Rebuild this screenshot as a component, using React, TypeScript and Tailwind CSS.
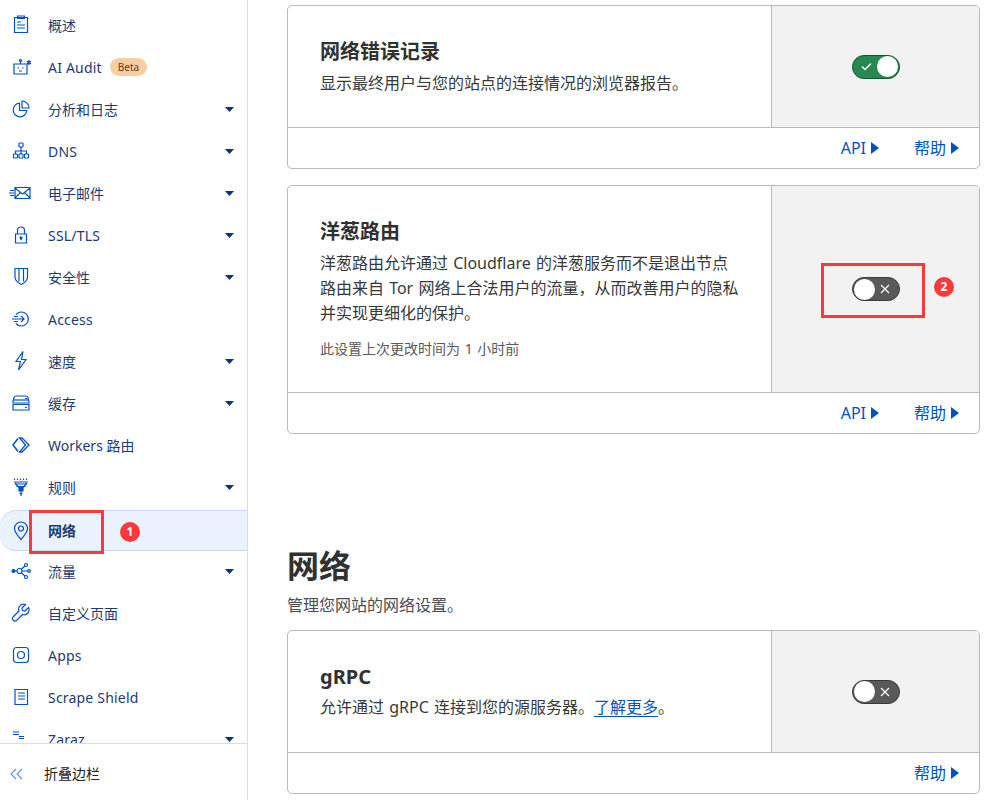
import React from "react";

const Caret = () => (
  <svg width="9" height="5" viewBox="0 0 10 5.500" className="absolute left-[225px] top-[19px]">
    <path d="M0 0h10L5 5.500z" fill="#003681" />
  </svg>
);

const s = { fill: "none", stroke: "#0051c3", strokeWidth: 1.2 };
const I = ({ children }: { children: React.ReactNode }) => (
  <svg width="20" height="20" viewBox="0 0 20 20" className="shrink-0" {...s}>
    {children}
  </svg>
);

const icons: Record<string, React.ReactNode> = {
  overview: (
    <I>
      <path d="M3.500 2.500h13v15h-13z" />
      <path d="M6.500 1h7v2.500h-7zM6 7h4M6 10h8M6 13h8" />
    </I>
  ),
  ai: (
    <I>
      <path d="M3 7h13v10H3zM9.500 7V4.500" />
      <circle cx="9.500" cy="3.500" r="1" />
      <path d="M6.500 11h1.500M11 11h1.500M8 14h3" />
      <path d="M18 3v5M15.800 4.200l4.400 2.600M20.200 4.200l-4.400 2.600" strokeWidth="1.300" />
    </I>
  ),
  pie: (
    <I>
      <path d="M8.500 4.200a6.800 6.800 0 1 0 7.300 7.300H8.500z" />
      <path d="M11 2a7 7 0 0 1 7 7h-7z" />
    </I>
  ),
  dns: (
    <I>
      <rect x="8" y="2" width="4" height="4" rx=".8" />
      <rect x="2.500" y="13" width="4" height="4" rx=".8" />
      <rect x="8" y="13" width="4" height="4" rx=".8" />
      <rect x="13.500" y="13" width="4" height="4" rx=".8" />
      <path d="M10 6v7M4.500 13v-3h11v3" />
    </I>
  ),
  mail: (
    <svg width="22" height="20" viewBox="0 0 22 20" className="shrink-0 -ml-[2px]" {...s}>
      <path d="M6 4.500h15v11H6zM6 5l7.500 6L21 5M6 15l5.500-5.500M21 15l-5.500-5.500" />
      <path d="M1 7.500h4M0 10h5M1 12.500h4" />
    </svg>
  ),
  lock: (
    <I>
      <path d="M4.500 9h11v9h-11z" />
      <path d="M6.500 9V5.500a3.500 3.500 0 0 1 7 0V9" />
      <circle cx="10" cy="12.800" r="1" fill="#0051c3" />
      <path d="M10 13v2.200" />
    </I>
  ),
  shield: (
    <I>
      <path d="M4 1.500h12.500v8.500c0 4-3.200 6-6.200 7.500-3-1.500-6.300-3.500-6.300-7.500z" />
      <path d="M8 1.500v13M12.500 1.500v13" />
    </I>
  ),
  access: (
    <svg width="20" height="20" viewBox="0 0 20 20" className="shrink-0" {...s}>
      <path d="M1 10h12M10 7l3 3-3 3" />
      <path d="M5 5.500a7 7 0 1 1 0 9" />
      <path d="M3 7.500h4M3 12.500h4" />
    </svg>
  ),
  bolt: (
    <I>
      <path d="M12 .5 5 10.500h4.500L7.500 19 15 8.500h-4.500z" />
    </I>
  ),
  cache: (
    <I>
      <path d="M5 3h10q1.500 0 2 1.500L18 8.500V10H2V8.500L3 4.500Q3.500 3 5 3zM2 11.500h16V17H2z" />
      <path d="M2.500 7h15" />
      <path d="M14 5.500h2M14 14.500h2" strokeWidth="1" />
    </I>
  ),
  workers: (
    <I>
      <path d="M7 3.500 2 10l5 6.500" strokeWidth="1.500" />
      <path d="M8.500 3h2.500l7 7-7 7H8.500l6-7z" strokeWidth="1.300" />
    </I>
  ),
  rules: (
    <I>
      <path d="M3.500 1.500v1.500M6.500 1.500v1.500M9.500 1.500v1.500M12.500 1.500v1.500M15.500 1.500v1.500" strokeWidth="1.200" />
      <path d="M3 5h14M4 7h12M5.500 9.500h9" strokeWidth="1.200" />
      <path d="M8 10.500h4v3.500H8z" fill="#0051c3" />
      <path d="M10 14v5M8.500 16.500h3" />
      <path d="M4 6l4 4.500M16 6l-4 4.500" />
    </I>
  ),
  pin: (
    <I>
      <path d="M10 18.500C6 14 3.500 10.500 3.500 7.500a6.500 6.500 0 0 1 13 0c0 3-2.500 6.500-6.500 11z" />
      <circle cx="10" cy="7.500" r="2.500" />
    </I>
  ),
  traffic: (
    <svg width="20" height="20" viewBox="0 0 20 20" className="shrink-0" {...s}>
      <circle cx="2.500" cy="10" r="1.500" fill="#0051c3" />
      <circle cx="8.500" cy="10" r="2.500" />
      <circle cx="15" cy="4" r="1.500" />
      <circle cx="18" cy="10" r="1.300" />
      <circle cx="15" cy="16" r="1.500" />
      <path d="M4 10h2M10.500 8l3.500-3M11 10h5.500M10.500 12l3.500 3" />
    </svg>
  ),
  wrench: (
    <I>
      <path d="M17.500 4.500 14 8l-2.500-.5L11 5l3.500-3.500a5 5 0 0 0-6.500 6.500L2 14a2.500 2.500 0 0 0 3.500 3.500l6-6a5 5 0 0 0 6-7z" />
    </I>
  ),
  apps: (
    <I>
      <rect x="2.500" y="2.500" width="15" height="15" rx="3" />
      <circle cx="10" cy="10" r="3.500" />
    </I>
  ),
  scrape: (
    <I>
      <path d="M4 2.500h12.500v15H4zM7 6h7M7 9h7M7 12h7" />
    </I>
  ),
  zaraz: (
    <I>
      <path d="M2 3h6M2 5.500h6M8 7.500h5M8 9.500h5" />
    </I>
  ),
};

const items: { key: string; label: string; caret?: boolean; beta?: boolean; active?: boolean; latin?: boolean }[] = [
  { key: "overview", label: "概述" },
  { key: "ai", label: "AI Audit", beta: true, latin: true },
  { key: "pie", label: "分析和日志", caret: true },
  { key: "dns", label: "DNS", caret: true, latin: true },
  { key: "mail", label: "电子邮件", caret: true },
  { key: "lock", label: "SSL/TLS", caret: true, latin: true },
  { key: "shield", label: "安全性", caret: true },
  { key: "access", label: "Access", latin: true },
  { key: "bolt", label: "速度", caret: true },
  { key: "cache", label: "缓存", caret: true },
  { key: "workers", label: "Workers 路由" },
  { key: "rules", label: "规则", caret: true },
  { key: "pin", label: "网络", active: true },
  { key: "traffic", label: "流量", caret: true },
  { key: "wrench", label: "自定义页面" },
  { key: "apps", label: "Apps", latin: true },
  { key: "scrape", label: "Scrape Shield", latin: true },
  { key: "zaraz", label: "Zaraz", caret: true, latin: true },
];

const Toggle = ({ on }: { on?: boolean }) =>
  on ? (
    <div className="flex h-6 w-12 items-center justify-between rounded-full border border-[#14522f] bg-[#26894d] pl-[8px] pr-[1px]">
      <svg width="11" height="9" viewBox="0 0 11 9" fill="none" stroke="#fff" strokeWidth="1.300">
        <path d="M1 4.500 4 7.500 10 1.500" />
      </svg>
      <div className="h-[21px] w-[21px] rounded-full bg-white" />
    </div>
  ) : (
    <div className="flex h-6 w-12 items-center justify-between rounded-full border border-[#3a3a3a] bg-[#595959] pl-[1px] pr-[9px]">
      <div className="h-[21px] w-[21px] rounded-full bg-white" />
      <svg width="10" height="10" viewBox="0 0 10 10" fill="none" stroke="#fff" strokeWidth="1.200">
        <path d="M1 1l8 8M9 1l-8 8" />
      </svg>
    </div>
  );

const LinkArrow = ({ label }: { label: string }) => (
  <span className="flex items-center gap-[5px] text-[16px] leading-6 text-[#0051c3]">
    {label}
    <svg width="8" height="14" viewBox="0 0 8 14">
      <path d="M0 1v12l8-6z" fill="#0051c3" />
    </svg>
  </span>
);

const Card = ({
  title,
  on,
  api,
  bodyH,
  children,
}: {
  title: string;
  on?: boolean;
  api?: boolean;
  bodyH: string;
  children: React.ReactNode;
}) => (
  <div className="w-[693px] overflow-hidden rounded-[5px] border border-[#b9b9b9] bg-white">
    <div className={`flex ${bodyH}`}>
      <div className="w-[484px] border-r border-[#b9b9b9] pl-[32px] pr-[32px] pt-[31px]">
        <h3 className="mb-[4px] text-[20px] font-bold leading-[30px] text-[#313131]">{title}</h3>
        {children}
      </div>
      <div className="flex flex-1 items-center justify-center bg-[#f2f2f2]">
        <Toggle on={on} />
      </div>
    </div>
    <div className="flex h-[41px] items-center justify-end gap-[35px] border-t border-[#b9b9b9] pr-[20px]">
      {api && <LinkArrow label="API" />}
      <LinkArrow label="帮助" />
    </div>
  </div>
);

const Badge = ({ n, className }: { n: number; className: string }) => (
  <div
    className={`absolute flex h-5 w-5 items-center justify-center rounded-full bg-[#f83a3a] text-[12px] font-bold text-white ${className}`}
  >
    {n}
  </div>
);

export default function App() {
  return (
    <div className="relative flex h-[800px] w-[986px] overflow-hidden bg-white font-['Noto_Sans','Noto_Sans_CJK_SC',sans-serif]">
      <aside className="flex h-[800px] w-[248px] shrink-0 flex-col border-r border-[#dcdcdc]">
        <nav className="min-h-0 flex-1 overflow-hidden pt-[4px]">
          {items.map((it) => (
            <div
              key={it.key}
              className={`relative flex items-center gap-[17px] pl-[11px] text-[14px] text-[#1d3a6e] ${
                it.active
                  ? "-mb-[1px] mt-[2px] h-[41px] rounded-l-[16px] border-y border-[#c3d9f7] bg-[#eaf2fd] font-bold"
                  : "h-[42px]"
              }`}
            >
              {icons[it.key]}
              <span className={it.latin ? "tracking-[0.2px]" : ""}>{it.label}</span>
              {it.beta && (
                <span className="-ml-[9px] rounded-full bg-[#fbcda0] px-[8px] text-[10px] leading-[18px] text-[#5b3a1e]">
                  Beta
                </span>
              )}
              {it.caret && <Caret />}
            </div>
          ))}
        </nav>
        <div className="flex h-[57px] shrink-0 items-center gap-[21px] border-t border-[#dcdcdc] bg-white pl-[10px] pt-[3px] text-[14px] text-[#222]">
          <svg width="13" height="12" viewBox="0 0 13 12" fill="none" stroke="#5b8fd6" strokeWidth="1.100">
            <path d="M6 1 1 6l5 5M12 1 7 6l5 5" />
          </svg>
          <span>折叠边栏</span>
        </div>
      </aside>

      <main className="flex min-w-0 flex-1 flex-col pl-[39px] pt-[5px]">
        <Card title="网络错误记录" on api bodyH="h-[121px]">
          <p className="text-[16px] leading-[25px] text-[#36393a]">显示最终用户与您的站点的连接情况的浏览器报告。</p>
        </Card>
        <div className="mt-[16px]">
          <Card title="洋葱路由" api bodyH="h-[206px]">
            <p className="text-[16px] leading-[25px] text-[#36393a] [word-spacing:1px]">
              洋葱路由允许通过 Cloudflare 的洋葱服务而不是退出节点路由来自 Tor 网络上合法用户的流量，从而改善用户的隐私并实现更细化的保护。
            </p>
            <p className="mt-[13px] text-[14px] leading-[20px] text-[#595959] [word-spacing:1px]">
              此设置上次更改时间为 1 小时前
            </p>
          </Card>
        </div>
        <h2 className="mt-[108px] text-[32px] font-bold leading-[48px] text-[#313131]">网络</h2>
        <p className="mb-[15px] mt-[5px] text-[16px] leading-[20px] text-[#4a4d4f]">管理您网站的网络设置。</p>
        <Card title="gRPC" bodyH="h-[121px]">
          <div className="-mt-[1px]">
            <p className="text-[16px] leading-[25px] text-[#36393a] [word-spacing:1px]">
              允许通过 gRPC 连接到您的源服务器。
              <a className="text-[#0051c3] underline underline-offset-[3px]">了解更多</a>。
            </p>
          </div>
        </Card>
      </main>

      <div className="absolute left-[29px] top-[510px] h-[44px] w-[75px] border-[3px] border-[#f83a3a]" />
      <Badge n={1} className="left-[120px] top-[522px]" />
      <div className="absolute left-[821px] top-[263px] h-[55px] w-[104px] border-[3px] border-[#f83a3a]" />
      <Badge n={2} className="left-[934px] top-[277px]" />
    </div>
  );
}
